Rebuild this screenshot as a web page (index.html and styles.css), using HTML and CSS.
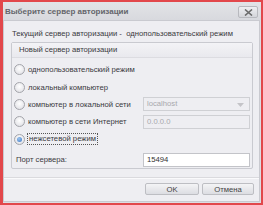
FILE: index.html
```html
<!DOCTYPE html>
<html>
<head>
<meta charset="utf-8">
<link rel="stylesheet" href="styles.css">
</head>
<body>
<div class="window">
  <div class="titlebar">
    <span class="title">Выберите сервер авторизации</span>
    <span class="close"><svg width="9" height="7" viewBox="0 0 9 7"><path d="M1 0.5 L8 6.5 M8 0.5 L1 6.5" stroke="#6a6a6a" stroke-width="1.6"/></svg></span>
  </div>
  <div class="client">
    <div class="current">Текущий сервер авторизации - &nbsp;однопользовательский режим</div>
    <div class="group">
      <div class="group-head">Новый сервер авторизации</div>
      <div class="group-body">
        <div class="row"><span class="radio"></span><span class="label">однопользовательский режим</span></div>
        <div class="row"><span class="radio"></span><span class="label">локальный компьютер</span></div>
        <div class="row"><span class="radio"></span><span class="label">компьютер в локальной сети</span><span class="field combo disabled">localhost<svg class="arrow" width="7" height="4" viewBox="0 0 7 4"><path d="M0 0 H7 L3.5 4 Z" fill="#c4c4c8"/></svg></span></div>
        <div class="row"><span class="radio"></span><span class="label">компьютер в сети Интернет</span><span class="field disabled">0.0.0.0</span></div>
        <div class="row"><span class="radio checked"></span><span class="label focus">нежсетевой режим</span></div>
        <div class="row port"><span class="plabel">Порт сервера:</span><span class="field">15494</span></div>
      </div>
    </div>
    <div class="footer">
      <span class="btn">OK</span>
      <span class="btn">Отмена</span>
    </div>
  </div>
</div>
</body>
</html>
```
FILE: styles.css
```css
html, body {
  margin: 0;
  padding: 0;
}
body {
  width: 263px;
  height: 205px;
  overflow: hidden;
  font-family: "Liberation Sans", Arial, sans-serif;
  font-size: 7.7px;
  color: #3a3a3e;
}
.window {
  box-sizing: border-box;
  width: 263px;
  height: 205px;
  border: 2px solid #e2474b;
  border-left-width: 3px;
  background: #dcdde2;
  display: flex;
  flex-direction: column;
}
.titlebar {
  height: 18px;
  display: flex;
  align-items: center;
  justify-content: space-between;
  padding: 0 3px 0 2px;
  background: linear-gradient(#e2e3e7, #d8d9de);
}
.title {
  font-family: "Liberation Sans", sans-serif;
  font-weight: bold;
  font-size: 8px;
  color: #64656b;
}
.close {
  box-sizing: border-box;
  width: 20px;
  height: 12px;
  border: 1px solid #b8b9be;
  border-radius: 2px;
  background: linear-gradient(#eeeef1, #d4d5da);
  display: flex;
  align-items: center;
  justify-content: center;
  margin-top: 2px;
}
.client {
  flex: 1;
  margin: 0 1px 1px 0;
  border: 1px solid #c9cad0;
  background: #eeeef2;
  display: flex;
  flex-direction: column;
  padding: 0 6px 0 7px;
}
.current {
  margin-top: 7px;
  height: 12px;
  line-height: 12px;
  padding-left: 1px;
  white-space: nowrap;
}
.group {
  margin-top: 2px;
  border: 1px solid #c9cad0;
  border-radius: 2px;
  height: 127px;
  box-sizing: border-box;
  background: #eeeef2;
}
.group-head {
  height: 14px;
  line-height: 14px;
  padding-left: 7px;
  background: linear-gradient(#f3f3f6, #e9e9ee);
  border-bottom: 1px solid #dcdce1;
}
.group-body {
  padding: 3px 2px 0 2px;
  display: flex;
  flex-direction: column;
}
.row {
  height: 17.4px;
  display: flex;
  align-items: center;
}
.radio {
  box-sizing: border-box;
  width: 11px;
  height: 11px;
  border-radius: 50%;
  border: 1px solid #a4a5ab;
  background: radial-gradient(circle at 50% 40%, #ffffff 0%, #e6e6ea 70%, #d2d3d8 100%);
  margin-right: 3px;
  flex: none;
  position: relative;
}
.radio.checked::after {
  content: "";
  position: absolute;
  left: 2px;
  top: 2px;
  width: 5px;
  height: 5px;
  border-radius: 50%;
  background: radial-gradient(circle at 40% 35%, #9cc4ee, #3b76c4);
}
.label {
  flex: 1;
  min-width: 0;
  white-space: nowrap;
}
.label.focus {
  flex: none;
  outline: 1px dotted #555;
  outline-offset: 0;
  padding: 0 1px;
  line-height: 10px;
}
.field {
  box-sizing: border-box;
  width: 107px;
  height: 14px;
  border: 1px solid #c3c4c9;
  background: #ffffff;
  line-height: 12px;
  padding-left: 3px;
  flex: none;
  color: #333;
  position: relative;
}
.field.disabled {
  background: #eeeef2;
  color: #a8a8ad;
  border-color: #cfd0d4;
}
.combo .arrow {
  position: absolute;
  right: 5px;
  top: 5px;
}
.row.port {
  margin-top: 3px;
}
.plabel {
  flex: 1;
  padding-left: 2px;
}
.footer {
  margin: 9px -6px 0 -7px;
  border-top: 1px solid #fafafc;
  box-shadow: 0 -1px 0 #dadade;
  display: flex;
  justify-content: flex-end;
  gap: 3px;
  padding: 4px 5px 0 0;
}
.btn {
  box-sizing: border-box;
  width: 54px;
  height: 12px;
  border: 1px solid #bdbec3;
  border-radius: 2px;
  background: linear-gradient(#f4f4f6, #dcdde2);
  display: flex;
  align-items: center;
  justify-content: center;
  color: #444;
}
.btn + .btn {
  width: 52px;
}
```
